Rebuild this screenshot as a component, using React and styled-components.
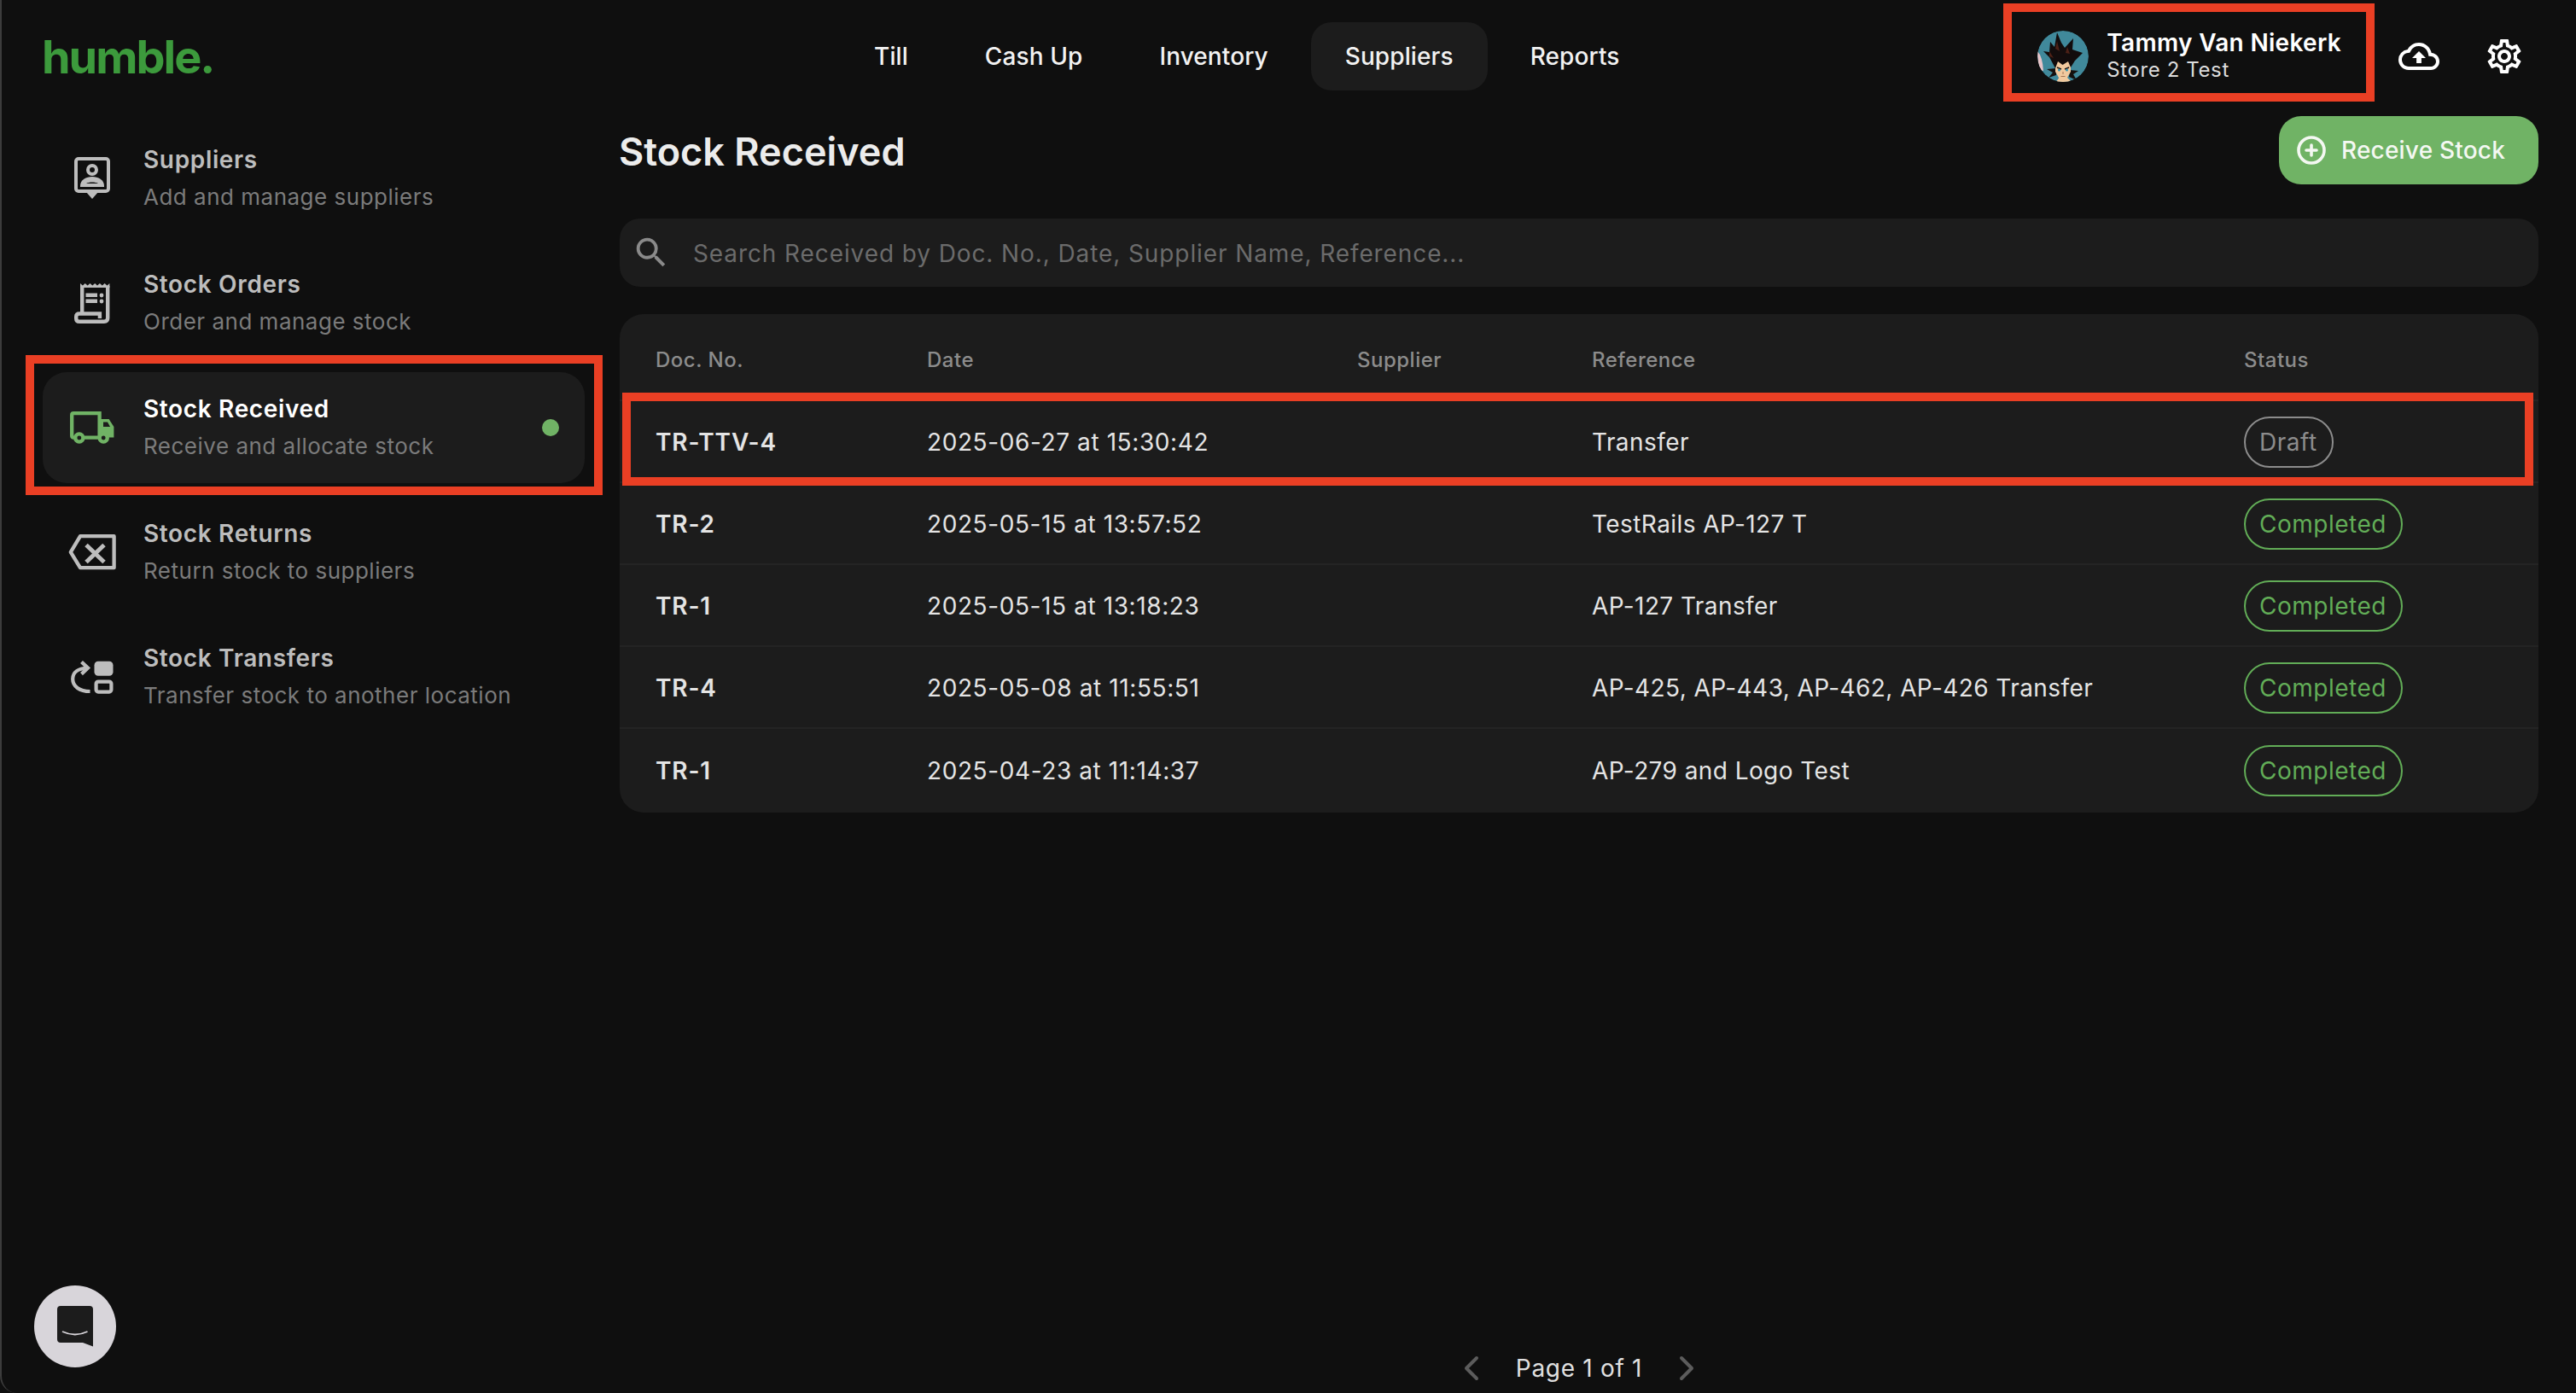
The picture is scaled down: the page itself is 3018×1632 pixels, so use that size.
import React from "react";
import styled, { createGlobalStyle } from "styled-components";
import { MdOutlineCloudUpload, MdOutlineSettings, MdSearch } from "react-icons/md";
import { ChevronLeft, ChevronRight, CirclePlus } from "lucide-react";

const GREEN = "#70b365";
const BG = "#0f0f0f";
const PANEL = "#1c1c1c";
const RED = "#ea3f24";

const GlobalStyle = createGlobalStyle`
  html, body {
    margin: 0;
    padding: 0;
    background: ${BG};
  }
  * {
    box-sizing: border-box;
  }
`;

const Shell = styled.div`
  position: relative;
  width: 3018px;
  height: 1632px;
  display: flex;
  flex-direction: column;
  overflow: hidden;
  background: ${BG};
  border-left: 2px solid #3c3c3c;
  border-bottom-left-radius: 20px;
  font-family: "Inter", "Liberation Sans", sans-serif;
  color: #ececec;
`;

const Header = styled.header`
  flex: 0 0 132px;
  display: flex;
  align-items: center;
  padding: 0 60px 0 47px;
`;

const Logo = styled.div`
  flex: 0 0 935px;
  font-size: 54px;
  font-weight: 700;
  letter-spacing: -2px;
  color: #3c9a3c;
`;

const Nav = styled.nav`
  display: flex;
  gap: 10px;
`;

const NavLink = styled.a`
  height: 80px;
  padding: 0 40px;
  display: flex;
  align-items: center;
  border-radius: 24px;
  font-size: 28px;
  font-weight: 500;
  letter-spacing: 0.1px;
  color: #f2f2f2;
  background: ${(p) => (p.$active ? PANEL : "transparent")};
`;

const UserBlock = styled.div`
  position: relative;
  margin-left: auto;
  margin-right: 67px;
  display: flex;
  align-items: center;
  gap: 21px;
`;

const UserText = styled.div`
  margin-bottom: 4px;
  display: flex;
  flex-direction: column;
`;

const UserName = styled.div`
  font-size: 28px;
  line-height: 36px;
  font-weight: 600;
  letter-spacing: 0.3px;
  color: #fff;
`;

const UserStore = styled.div`
  font-size: 24px;
  line-height: 28px;
  color: #dcdcdc;
  letter-spacing: 0.6px;
`;

const Highlight = styled.div`
  position: absolute;
  top: ${(p) => p.$top}px;
  right: ${(p) => p.$right}px;
  bottom: ${(p) => p.$bottom}px;
  left: ${(p) => p.$left}px;
  border: 10px solid ${RED};
  pointer-events: none;
`;

const HeaderActions = styled.div`
  display: flex;
  gap: 52px;
  color: #fff;
`;

const Body = styled.div`
  flex: 1;
  min-height: 0;
  display: flex;
`;

const Sidebar = styled.aside`
  flex: 0 0 724px;
  padding: 12px 0 0 48px;
  display: flex;
  flex-direction: column;
  gap: 16px;
`;

const SideItem = styled.div`
  position: relative;
  width: 635px;
  height: 130px;
  display: flex;
  align-items: center;
  border-radius: 28px;
  background: ${(p) => (p.$active ? PANEL : "transparent")};
  color: ${(p) => (p.$active ? GREEN : "#bdbdbd")};
`;

const IconSlot = styled.div`
  flex: 0 0 116px;
  margin-right: 2px;
  display: flex;
  justify-content: center;
`;

const SideText = styled.div`
  display: flex;
  flex-direction: column;
  gap: 8px;
`;

const SideTitle = styled.div`
  font-size: 28px;
  line-height: 36px;
  font-weight: 600;
  letter-spacing: 0.65px;
  color: ${(p) => (p.$active ? "#fff" : "#bdbdbd")};
`;

const SideSub = styled.div`
  font-size: 26px;
  line-height: 36px;
  color: #7b7b7b;
  letter-spacing: 0.5px;
`;

const ActiveDot = styled.span`
  margin-left: auto;
  margin-right: 30px;
  width: 20px;
  height: 20px;
  border-radius: 50%;
  background: ${GREEN};
`;

const Main = styled.main`
  flex: 1;
  min-width: 0;
  padding: 4px 44px 9px 0;
  display: flex;
  flex-direction: column;
`;

const TitleRow = styled.div`
  display: flex;
  align-items: center;
  justify-content: space-between;
`;

const PageTitle = styled.h1`
  margin: 2px 0 0 -1px;
  font-size: 45px;
  font-weight: 600;
  color: #ececec;
`;

const ReceiveButton = styled.button`
  width: 304px;
  height: 80px;
  padding: 0 0 0 20px;
  display: flex;
  align-items: center;
  gap: 17px;
  border: 0;
  border-radius: 26px;
  background: ${GREEN};
  color: #f4f8f2;
  font-family: inherit;
  font-size: 28px;
  font-weight: 500;
  letter-spacing: 0.2px;
`;

const SearchBar = styled.div`
  margin-top: 40px;
  height: 80px;
  padding-left: 14px;
  display: flex;
  align-items: center;
  gap: 26px;
  border-radius: 24px;
  background: ${PANEL};
  color: #8a8a8a;
`;

const SearchText = styled.span`
  padding-top: 1px;
  font-size: 28px;
  color: #6b6b6b;
  letter-spacing: 0.9px;
`;

const Table = styled.div`
  margin-top: 32px;
  padding-bottom: 2px;
  border-radius: 28px;
  background: ${PANEL};
`;

const Row = styled.div`
  position: relative;
  padding: ${(p) => (p.$head ? 6 : 2)}px 0 0 42px;
  height: ${(p) => (p.$head ? 102 : 96)}px;
  display: grid;
  grid-template-columns: 318px 504px 275px 764px 1fr;
  align-items: center;
  border-bottom: ${(p) => (p.$last ? "0" : "2px solid #242424")};
  font-size: 28px;
  color: #e4e4e4;
`;

const HeadCell = styled.div`
  font-size: 24px;
  font-weight: 500;
  color: #8c8c8c;
  letter-spacing: 0.5px;
`;

const DocCell = styled.div`
  font-weight: 600;
  letter-spacing: 0.85px;
`;

const DateCell = styled.div`
  letter-spacing: 0.6px;
`;

const RefCell = styled.div`
  letter-spacing: 0.42px;
`;

const StatusPill = styled.span`
  display: inline-flex;
  align-items: center;
  height: 60px;
  padding: 0 17px 0 16px;
  border: 2px solid ${(p) => (p.$draft ? "#8c8c8c" : "#62ad57")};
  border-radius: 30px;
  color: ${(p) => (p.$draft ? "#8c8c8c" : "#62ad57")};
  letter-spacing: 0.5px;
`;

const Pagination = styled.div`
  margin-top: auto;
  height: 40px;
  display: flex;
  align-items: center;
  justify-content: center;
  gap: 28px;
  color: #5c5c5c;
`;

const PageLabel = styled.span`
  font-size: 28px;
  letter-spacing: 0.7px;
  color: #e0e0e0;
`;

const ChatBubble = styled.div`
  position: absolute;
  left: 38px;
  bottom: 30px;
  width: 96px;
  height: 96px;
  display: flex;
  align-items: center;
  justify-content: center;
  border-radius: 50%;
  background: #d8d5da;
`;

const SuppliersIcon = () => (
  <svg width="42" height="50" viewBox="0 0 42 50" fill="currentColor">
    <rect x="2" y="2" width="38" height="38" rx="3" fill="none" stroke="currentColor" strokeWidth="4" />
    <path d="M14 41 H28 L21 49 Z" />
    <circle cx="21" cy="15" r="5" fill="none" stroke="currentColor" strokeWidth="4" />
    <path d="M7 35 V33.5 C7 27 14 23 21 23 C28 23 35 27 35 33.5 V35 Z" />
    <path d="M14 31 C17 29 25 29 28 31 Z" fill={BG} />
  </svg>
);

const OrdersIcon = () => (
  <svg width="42" height="47" viewBox="0 0 42 47" fill="none" stroke="currentColor" strokeWidth="4.4">
    <path
      d="M7 5 V0 L9.9 2.6 12.7 0 15.6 2.6 18.5 0 21.3 2.6 24.2 0 27 2.6 29.9 0 32.8 2.6 35.6 0 38.5 2.6 41.4 0 V5 Z"
      fill="currentColor"
      stroke="none"
    />
    <path d="M9.2 3 V35.5" />
    <path d="M39.2 3 V40.5 Q39.2 44.8 35 44.8 H6 Q2.2 44.8 2.2 41 V39 Q2.2 35.5 6 35.5 H29.9 V41" />
    <path d="M13.5 13.8 H27 M13.5 20.8 H27" />
    <circle cx="32" cy="14" r="2.4" fill="currentColor" stroke="none" />
    <circle cx="32" cy="21" r="2.4" fill="currentColor" stroke="none" />
  </svg>
);

const TruckIcon = () => (
  <svg width="52" height="38" viewBox="0 0 52 38" fill="none" stroke="currentColor" strokeWidth="4.3">
    <path d="M5 30.6 H4.2 Q2.2 30.6 2.2 28.6 V4.2 Q2.2 2.2 4.2 2.2 H34.6 V30.6 H17" />
    <path d="M36 9 H45.6 L51.4 18 V30.6 H36 Z" fill="currentColor" stroke="none" />
    <path d="M39 12.4 H44 L47 18 H39 Z" fill={PANEL} stroke="none" />
    <circle cx="10.8" cy="31" r="4.6" fill={PANEL} />
    <circle cx="39.2" cy="31" r="4.6" fill={PANEL} />
  </svg>
);

const ReturnsIcon = () => (
  <svg width="56" height="42" viewBox="0 0 56 42" fill="none" stroke="currentColor" strokeLinejoin="round">
    <path d="M2.8 20.8 L14 2.2 H53.6 V39.2 H14 Z" strokeWidth="4.3" />
    <path d="M21 12.5 L42 32.5 M42 12.5 L21 32.5" strokeWidth="5" />
  </svg>
);

const TransfersIcon = () => (
  <svg width="50" height="39" viewBox="0 0 50 39" fill="none" stroke="currentColor" strokeWidth="4.2">
    <path d="M22.5 36 C10 36 2.2 30 2.2 21.5 C2.2 13.5 9 9 19 8.6" />
    <path d="M12.5 1.5 L20 8.6 L12.5 15.6" />
    <rect x="27.5" y="0.7" width="22" height="17" rx="4.5" fill="currentColor" stroke="none" />
    <rect x="29.6" y="24.6" width="17.8" height="12" rx="2.5" />
  </svg>
);

const Avatar = () => (
  <svg width="60" height="60" viewBox="0 0 60 60" style={{ borderRadius: "50%", flex: "none" }}>
    <circle cx="30" cy="30" r="30" fill="#40899b" />
    <path d="M0 24 Q6 30 7 47 L3 46 Q0 36 0 24 Z" fill="#e8c4c8" />
    <path d="M22 44 L11 45 L18 49 L13 55 L22 52 Z M38 46 L48 47 L42 51 L46 58 L37 54 Z" fill="#14100e" />
    <path d="M22 60 L26 54 H34 L40 60 Z" fill="#f1c99e" />
    <path d="M21 36 H39 V48 L35 55 L30 57 L25 55 L21 48 Z" fill="#f1c99e" />
    <path
      d="M21 44 L14 31 L7 24 L14 25 L15 13 L20 19 L23 2 L28 14 L32 20 L42 9 L41 22 L53 26 L44 35 L39 43 L36 36 L29.5 40 L24 36 Z"
      fill="#120c0c"
    />
    <path d="M23 12 L26 24 L21 21 Z M35 19 L38 27 L33 26 Z M14 24 L19 32 L14 30 Z" fill="#4c2016" />
    <path d="M23 43 L28 45 M32 45 L37 43" stroke="#1b1210" strokeWidth="1.4" />
    <circle cx="25.5" cy="46" r="1.5" fill="#2f96b4" />
    <circle cx="34.5" cy="46" r="1.5" fill="#2f96b4" />
    <path d="M30 48 V51 M27.5 53.5 H32.5" stroke="#9a6a4a" strokeWidth="0.9" />
  </svg>
);

const ChatIcon = () => (
  <svg width="42" height="48" viewBox="0 0 42 48">
    <path d="M4 0 H38 Q42 0 42 4 V47.5 L30 43 H4 Q0 43 0 39 V4 Q0 0 4 0 Z" fill={PANEL} />
    <path d="M6 30 Q21 37 35.5 30" fill="none" stroke="#d8d5da" strokeWidth="1.8" />
  </svg>
);

const navLinks = ["Till", "Cash Up", "Inventory", "Suppliers", "Reports"];

const sideItems = [
  { title: "Suppliers", sub: "Add and manage suppliers", Icon: SuppliersIcon },
  { title: "Stock Orders", sub: "Order and manage stock", Icon: OrdersIcon },
  { title: "Stock Received", sub: "Receive and allocate stock", Icon: TruckIcon, active: true },
  { title: "Stock Returns", sub: "Return stock to suppliers", Icon: ReturnsIcon },
  { title: "Stock Transfers", sub: "Transfer stock to another location", Icon: TransfersIcon }
];

const rows = [
  { doc: "TR-TTV-4", date: "2025-06-27 at 15:30:42", ref: "Transfer", status: "Draft" },
  { doc: "TR-2", date: "2025-05-15 at 13:57:52", ref: "TestRails AP-127 T", status: "Completed" },
  { doc: "TR-1", date: "2025-05-15 at 13:18:23", ref: "AP-127 Transfer", status: "Completed" },
  { doc: "TR-4", date: "2025-05-08 at 11:55:51", ref: "AP-425, AP-443, AP-462, AP-426 Transfer", status: "Completed" },
  { doc: "TR-1", date: "2025-04-23 at 11:14:37", ref: "AP-279 and Logo Test", status: "Completed" }
];

export default function App() {
  return (
    <Shell>
      <GlobalStyle />
      <Header>
        <Logo>humble.</Logo>
        <Nav>
          {navLinks.map((link) => (
            <NavLink key={link} $active={link === "Suppliers"}>
              {link}
            </NavLink>
          ))}
        </Nav>
        <UserBlock>
          <Avatar />
          <UserText>
            <UserName>Tammy Van Niekerk</UserName>
            <UserStore>Store 2 Test</UserStore>
          </UserText>
          <Highlight $top={-28} $right={-39} $bottom={-19} $left={-40} />
        </UserBlock>
        <HeaderActions>
          <MdOutlineCloudUpload size={48} />
          <MdOutlineSettings size={48} />
        </HeaderActions>
      </Header>
      <Body>
        <Sidebar>
          {sideItems.map(({ title, sub, Icon, active }) => (
            <SideItem key={title} $active={active}>
              <IconSlot>
                <Icon />
              </IconSlot>
              <SideText>
                <SideTitle $active={active}>{title}</SideTitle>
                <SideSub>{sub}</SideSub>
              </SideText>
              {active && <ActiveDot />}
              {active && <Highlight $top={-20} $right={-21} $bottom={-14} $left={-20} />}
            </SideItem>
          ))}
        </Sidebar>
        <Main>
          <TitleRow>
            <PageTitle>Stock Received</PageTitle>
            <ReceiveButton>
              <CirclePlus size={36} strokeWidth={2.4} />
              Receive Stock
            </ReceiveButton>
          </TitleRow>
          <SearchBar>
            <MdSearch size={46} />
            <SearchText>Search Received by Doc. No., Date, Supplier Name, Reference...</SearchText>
          </SearchBar>
          <Table>
            <Row $head>
              <HeadCell>Doc. No.</HeadCell>
              <HeadCell>Date</HeadCell>
              <HeadCell>Supplier</HeadCell>
              <HeadCell>Reference</HeadCell>
              <HeadCell>Status</HeadCell>
            </Row>
            {rows.map((row, i) => (
              <Row key={row.date} $last={i === rows.length - 1}>
                <DocCell>{row.doc}</DocCell>
                <DateCell>{row.date}</DateCell>
                <div />
                <RefCell>{row.ref}</RefCell>
                <div>
                  <StatusPill $draft={row.status === "Draft"}>{row.status}</StatusPill>
                </div>
                {i === 0 && <Highlight $top={-10} $right={6} $bottom={-5} $left={3} />}
              </Row>
            ))}
          </Table>
          <Pagination>
            <ChevronLeft size={48} strokeWidth={2} />
            <PageLabel>Page 1 of 1</PageLabel>
            <ChevronRight size={48} strokeWidth={2} />
          </Pagination>
        </Main>
      </Body>
      <ChatBubble>
        <ChatIcon />
      </ChatBubble>
    </Shell>
  );
}
